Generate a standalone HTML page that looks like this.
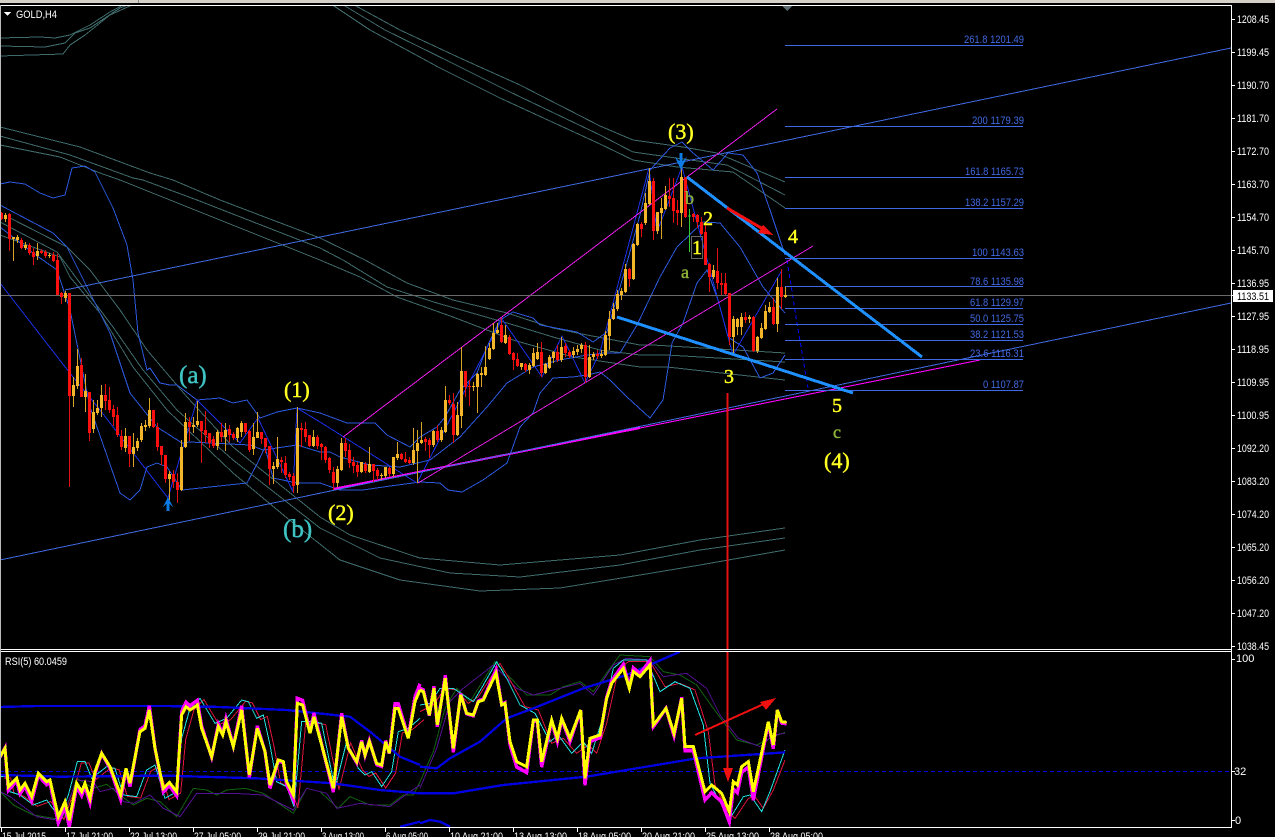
<!DOCTYPE html>
<html><head><meta charset="utf-8"><style>
html,body{margin:0;padding:0;background:#000;width:1275px;height:837px;overflow:hidden}
svg{display:block}
text{font-family:"Liberation Sans",sans-serif;font-size:11px;fill:#fff}
.f text{fill:#4169e1}
text.y,text.t,text.g{font-family:"Liberation Serif",serif;stroke-width:.45px}
text.y{fill:#ffff22;stroke:#ffff22}
text.t{fill:#3fc3c3;stroke:#3fc3c3}
text.g{fill:#8db339;stroke:#8db339}
</style></head><body>
<svg width="1275" height="837" viewBox="0 0 1275 837" xmlns="http://www.w3.org/2000/svg" fill="none" shape-rendering="crispEdges">
<rect width="1275" height="837" fill="#000"/>
<rect width="1275" height="3" fill="#d4d0c8"/><rect x="138" width="1" height="3" fill="#888"/>
<defs><clipPath id="m"><rect x="1" y="6" width="1230" height="643"/></clipPath><clipPath id="r"><rect x="1" y="652" width="1230" height="175"/></clipPath></defs>

<g clip-path="url(#m)">
<!-- teal MA envelopes -->
<g stroke="#3f6a6a" stroke-width="1">
<polyline points="0,38 40,37 55,38 70,35 90,25 110,12 123,5"/>
<polyline points="0,46 45,47 65,43 75,33 90,28 120,8 128,5"/>
<polyline points="0,56 63,54 70,45 85,35 110,15 132,5"/>
<polyline points="0,127 80,147 150,173 173,180 220,200 320,238 365,260 407,283 453,300 507,313 553,328 587,335 640,345 653,345 785,353"/>
<polyline points="0,136 70,155 133,178 143,180 197,200 320,248 343,260 387,287 437,303 507,323 553,337 600,350 640,355 667,355 785,362"/>
<polyline points="0,145 60,157 100,173 120,180 170,200 320,260 360,277 397,297 453,317 513,340 573,357 640,367 667,367 785,380"/>
<polyline points="345,0 400,30 460,58 520,85 600,126 633,140 683,147 717,153 785,182"/>
<polyline points="335,0 385,30 450,62 510,92 600,135 633,152 683,159 727,165 785,195"/>
<polyline points="325,0 370,30 440,68 500,98 600,144 633,160 677,167 733,172 785,208"/>
<polyline points="10,218 67,247 90,270 120,310 147,350 187,397 233,447 320,517 350,535 420,558 500,565 620,555 700,540 785,528"/>
<polyline points="0,222 57,252 80,283 113,327 143,370 177,410 233,460 320,528 380,558 450,573 520,577 620,565 700,550 785,538"/>
<polyline points="0,235 60,257 70,277 100,313 133,367 167,410 233,473 287,518 340,560 400,580 480,591 560,588 640,575 700,565 785,550"/>
</g>
<!-- Bollinger -->
<g stroke="#2b58dc" stroke-width="1">
<polyline points="0,184 10,182 25,184 40,193 53,198 65,195 72,168 85,166 95,172 99,180 113,208 127,245 133,280 138,333 147,370 150,368 160,383 170,385 177,385 197,400 220,398 233,403 247,400 260,418 277,412 297,408 320,413 347,423 375,423 387,435 410,447 420,437 437,427 445,417 460,390 477,373 487,347 500,320 513,312 533,318 540,325 577,332 593,342 607,332 625,270 640,215 650,170 670,148 682,142 692,152 713,170 728,153 743,155 757,173 770,210 785,255"/>
<polyline points="0,205 53,233 67,247 87,287 110,333 130,393 157,427 182,443 190,442 250,445 263,450 297,445 320,452 330,452 340,457 370,465 400,467 430,460 460,437 487,407 507,383 533,367 560,360 587,355 603,353 620,353 637,325 660,277 677,247 703,222 720,223 740,247 763,287 785,313"/>
<polyline points="0,227 33,253 57,270 70,310 90,407 120,493 130,500 140,490 147,467 157,463 167,467 182,490 247,483 258,462 265,447 273,478 297,483 320,483 340,490 363,490 383,487 420,482 440,483 448,490 462,492 483,480 507,463 520,427 533,413 540,393 553,378 573,377 587,375 600,372 610,380 627,397 650,418 663,400 672,343 683,323 697,283 707,270 718,300 728,337 743,347 760,378 773,373 785,355"/>
</g>
<!-- zigzag -->
<polyline stroke="#1a2fe6" stroke-width="1" points="0,283 69,372 100,410 168,498 197,400 240,443 258,418 293,492 297,408 320,422 417,483 502,319 542,377 562,336 585,383 600,352 649,168 657,232 682,167 733,355 782,270"/>
<polyline stroke="#0000ff" stroke-width="1" stroke-dasharray="4 3" points="787,260 797,323 808,388"/>
<!-- trend lines -->
<line x1="333" y1="489" x2="640" y2="428" stroke="#ff00ff" stroke-width="2"/>
<line x1="640" y1="428" x2="980" y2="360" stroke="#ff00ff" stroke-width="1"/>
<g stroke="#3f69e0" stroke-width="1">
<line x1="65" y1="290" x2="1231" y2="48"/>
<line x1="0" y1="560" x2="1231" y2="303"/>
</g>
<g stroke="#e81ee8" stroke-width="1">
<line x1="343" y1="437" x2="777" y2="109"/>
<line x1="418" y1="483" x2="813" y2="246"/>
</g>
<!-- fib -->
<g stroke="#3f69e0" stroke-width="1">
<path d="M785 45.5H1023M785 126.5H1023M785 177.5H1023M785 208.5H1023M785 258.5H1023M785 286.5H1023M785 308.5H1023M785 324.5H1023M785 340.5H1023M785 359.5H1023M785 390.5H1023"/>
</g>
<!-- price line -->
<line x1="0" y1="295.5" x2="1231" y2="295.5" stroke="#6a6a6a" stroke-width="1"/>

<!-- wicks gold -->
<path stroke="#d9a326" stroke-width="1" d="M5.5 213V222M13.5 237V261M17.5 235V243M25.5 242V250M37.5 243V260M49.5 253V258M65.5 291V302M73.5 377V407M77.5 349V389M85.5 374V412M93.5 400V433M97.5 400V415M101.5 385V417M125.5 428V452M133.5 433V467M137.5 438V451M141.5 423V442M145.5 420V431M149.5 398V428M169.5 471V500M181.5 440V491M185.5 413V448M193.5 417V433M197.5 401V427M217.5 430V450M225.5 423V451M237.5 427V442M241.5 421V437M253.5 423V455M257.5 412V438M273.5 462V484M277.5 437V469M297.5 407V493M313.5 430V447M337.5 466V487M341.5 438V471M361.5 462V473M369.5 447V473M381.5 473V480M385.5 467V478M393.5 457V477M397.5 442V460M413.5 428V465M417.5 430V483M421.5 422V444M433.5 430V447M441.5 427V442M445.5 386V433M457.5 402V436M461.5 347V428M473.5 382V391M477.5 373V413M481.5 367V387M485.5 346V376M489.5 343V360M493.5 323V350M497.5 323V334M505.5 325V344M521.5 363V370M529.5 363V374M533.5 348V367M537.5 343V360M545.5 363V374M549.5 355V369M553.5 351V363M561.5 337V362M573.5 347V358M577.5 345V355M581.5 343V353M589.5 345V378M593.5 352V360M601.5 350V358M605.5 331V356M609.5 311V350M613.5 303V320M617.5 290V311M621.5 288V300M625.5 264V293M633.5 243V280M637.5 223V246M645.5 193V225M649.5 168V205M657.5 212V234M661.5 198V239M665.5 186V210M681.5 162V227M713.5 265V279M733.5 316V355M737.5 318V335M741.5 313V335M749.5 315V323M757.5 336V353M761.5 323V339M765.5 305V330M769.5 302V313M777.5 278V332M785.5 287V298"/>
<!-- wicks red -->
<path stroke="#e01010" stroke-width="1" d="M1.5 212V220M9.5 213V251M21.5 238V249M29.5 243V255M33.5 248V265M41.5 249V254M45.5 250V258M53.5 252V262M57.5 254V295M61.5 292V304M69.5 293V487M81.5 358V397M89.5 392V441M105.5 384V410M109.5 387V413M113.5 405V426M117.5 407V437M121.5 430V450M129.5 436V467M153.5 410V428M157.5 423V451M161.5 446V465M165.5 455V483M173.5 470V488M177.5 473V503M189.5 417V441M201.5 421V463M205.5 411V443M209.5 433V448M213.5 436V448M221.5 423V442M229.5 425V442M233.5 432V440M245.5 423V434M249.5 430V452M261.5 432V444M265.5 438V453M269.5 446V485M281.5 457V473M285.5 456V478M289.5 472V480M293.5 473V493M301.5 423V447M305.5 422V442M309.5 435V447M317.5 435V449M321.5 443V460M325.5 446V463M329.5 457V473M333.5 467V490M345.5 438V457M349.5 444V468M353.5 457V473M357.5 462V477M365.5 462V473M373.5 464V482M377.5 468V480M389.5 467V477M401.5 453V460M405.5 452V463M409.5 457V464M425.5 437V451M429.5 438V458M437.5 425V442M449.5 395V405M453.5 393V443M465.5 371V397M469.5 380V406M501.5 318V343M509.5 335V355M513.5 352V370M517.5 353V367M525.5 363V372M541.5 342V377M557.5 345V362M565.5 343V357M569.5 350V358M585.5 342V383M597.5 350V359M629.5 268V287M641.5 222V237M653.5 178V240M669.5 178V207M673.5 178V223M677.5 200V225M685.5 177V218M693.5 213V222M697.5 214V228M701.5 217V235M705.5 225V265M709.5 263V292M717.5 248V289M721.5 273V295M725.5 273V295M729.5 293V345M745.5 312V323M753.5 316V352M773.5 298V325M781.5 269V309"/>
<!-- bodies gold -->
<path stroke="#f3b62a" stroke-width="3" d="M5.5 215V219M13.5 237V239M17.5 237V240M25.5 245V248M37.5 251V256M49.5 255V256M65.5 293V298M73.5 385V396M77.5 366V386M85.5 391V397M93.5 412V429M97.5 408V413M101.5 395V408M125.5 436V448M133.5 447V454M137.5 441V448M141.5 426V440M145.5 425V427M149.5 410V426M169.5 474V479M181.5 447V490M185.5 422V447M193.5 425V427M197.5 421V425M217.5 432V446M225.5 430V437M237.5 428V438M241.5 423V432M253.5 437V449M257.5 432V438M273.5 466V469M277.5 459V467M297.5 428V485M313.5 437V446M337.5 469V483M341.5 443V470M361.5 462V472M369.5 464V472M381.5 475V476M385.5 467V476M393.5 457V474M397.5 454V458M421.5 440V443M413.5 450V463M417.5 443V451M433.5 431V445M441.5 430V440M445.5 400V432M457.5 415V435M461.5 371V416M473.5 386V387M477.5 374V387M481.5 373V375M485.5 367V375M489.5 348V359M493.5 333V349M497.5 330V333M505.5 335V343M521.5 363V367M529.5 365V370M533.5 353V366M537.5 352V359M545.5 364V373M549.5 357V368M553.5 352V358M561.5 347V360M573.5 351V355M577.5 349V352M581.5 345V349M589.5 357V377M593.5 354V357M601.5 354V356M605.5 335V355M609.5 319V336M613.5 309V319M617.5 294V309M621.5 291V295M625.5 269V292M633.5 244V279M637.5 224V245M645.5 203V223M649.5 181V204M657.5 212V231M661.5 208V213M665.5 195V209M681.5 177V213M713.5 270V277M733.5 319V337M737.5 319V327M741.5 317V327M749.5 317V319M757.5 337V351M761.5 328V338M765.5 311V329M769.5 307V312M777.5 287V324M785.5 295V297"/>
<!-- bodies red -->
<path stroke="#fb1010" stroke-width="3" d="M1.5 213V219M9.5 214V239M21.5 240V248M29.5 245V253M33.5 252V257M41.5 251V253M45.5 252V256M53.5 255V261M57.5 260V295M61.5 293V297M69.5 293V396M81.5 365V397M89.5 392V433M105.5 395V401M109.5 400V410M113.5 409V417M117.5 415V435M121.5 436V447M129.5 436V454M153.5 410V427M157.5 427V447M161.5 446V455M165.5 455V479M173.5 474V482M177.5 482V490M189.5 422V427M201.5 421V431M205.5 430V435M209.5 433V443M213.5 439V446M221.5 432V437M229.5 429V435M233.5 434V438M245.5 423V432M249.5 431V450M261.5 432V439M265.5 438V447M269.5 446V469M281.5 460V462M285.5 463V475M289.5 474V477M293.5 476V486M301.5 428V430M305.5 429V437M309.5 435V446M317.5 437V446M321.5 444V447M325.5 447V460M329.5 458V470M333.5 472V483M345.5 443V451M349.5 450V463M353.5 462V466M357.5 465V472M365.5 464V471M373.5 464V471M377.5 470V476M389.5 468V474M401.5 454V459M405.5 459V462M409.5 460V463M425.5 439V442M429.5 440V445M437.5 431V440M449.5 400V403M453.5 404V435M465.5 371V387M469.5 386V387M501.5 325V342M509.5 337V354M513.5 353V360M517.5 359V366M525.5 364V370M541.5 352V373M557.5 352V360M565.5 346V353M569.5 352V356M585.5 345V377M597.5 354V356M629.5 269V279M641.5 224V229M653.5 181V231M669.5 196V199M673.5 198V211M677.5 210V213M685.5 177V217M693.5 214V217M697.5 215V222M701.5 222V234M705.5 232V265M709.5 264V277M717.5 271V283M721.5 283V285M725.5 283V294M729.5 293V337M745.5 317V320M753.5 317V351M773.5 307V324M781.5 287V297"/>
<line x1="689.5" y1="209" x2="689.5" y2="252" stroke="#33cc33" stroke-width="1"/>
<path d="M688 216H691" stroke="#33cc33"/>
<rect x="691.5" y="236.5" width="11" height="22" stroke="#666" stroke-width="1"/>
<!-- thick blue -->
<g stroke="#1e90ff" stroke-width="3">
<line x1="687" y1="177" x2="922" y2="357"/>
<line x1="617" y1="317" x2="853" y2="393"/>
</g>
<!-- blue arrows -->
<path fill="#0d7be6" d="M166.500 511V504L163 507L168 497L173 507L169.500 504V511Z"/>
<path fill="#0d7be6" d="M679.500 153V161L675 157L681 170L687 157L682.500 161V153Z"/>
<!-- small triangle top -->
<path fill="#5a6a70" d="M782 6H792L787 11Z"/>
<!-- red arrow down start -->
<line x1="727.5" y1="393" x2="727.5" y2="649" stroke="#e81010" stroke-width="2"/>
<line x1="727" y1="208" x2="763" y2="229" stroke="#f01010" stroke-width="3"/>
<path fill="#f01010" d="M773 235L763 225L758 233Z"/>
</g>

<g shape-rendering="auto">
<text class="t" x="179" y="383" style="font-size:25px">(a)</text>
<text class="y" x="284" y="397" style="font-size:22px">(1)</text>
<text class="y" x="328" y="520" style="font-size:22px">(2)</text>
<text class="t" x="283" y="537" style="font-size:25px">(b)</text>
<text class="y" x="668" y="139" style="font-size:22px">(3)</text>
<text class="g" x="685" y="204" style="font-size:18px">b</text>
<text class="g" x="681" y="278" style="font-size:18px">a</text>
<text class="y" x="692" y="254" style="font-size:20px">1</text>
<text class="y" x="703" y="225" style="font-size:20px">2</text>
<text class="y" x="724" y="383" style="font-size:20px">3</text>
<text class="y" x="788" y="243" style="font-size:20px">4</text>
<text class="y" x="832" y="412" style="font-size:20px">5</text>
<text class="g" x="833" y="438" style="font-size:18px">c</text>
<text class="y" x="824" y="468" style="font-size:22px">(4)</text>
</g>

<!-- fib labels -->
<g class="f" text-anchor="end" shape-rendering="auto">
<text x="1024" y="43" textLength="60" lengthAdjust="spacingAndGlyphs">261.8  1201.49</text>
<text x="1024" y="124" textLength="52" lengthAdjust="spacingAndGlyphs">200  1179.39</text>
<text x="1024" y="175" textLength="59" lengthAdjust="spacingAndGlyphs">161.8  1165.73</text>
<text x="1024" y="206" textLength="59" lengthAdjust="spacingAndGlyphs">138.2  1157.29</text>
<text x="1024" y="256" textLength="52" lengthAdjust="spacingAndGlyphs">100  1143.63</text>
<text x="1024" y="285" textLength="54" lengthAdjust="spacingAndGlyphs">78.6  1135.98</text>
<text x="1024" y="306" textLength="54" lengthAdjust="spacingAndGlyphs">61.8  1129.97</text>
<text x="1024" y="322" textLength="54" lengthAdjust="spacingAndGlyphs">50.0  1125.75</text>
<text x="1024" y="338" textLength="54" lengthAdjust="spacingAndGlyphs">38.2  1121.53</text>
<text x="1024" y="357" textLength="54" lengthAdjust="spacingAndGlyphs">23.6  1116.31</text>
<text x="1024" y="388" textLength="41" lengthAdjust="spacingAndGlyphs">0  1107.87</text>
</g>

<!-- RSI pane -->
<g clip-path="url(#r)">
<line x1="0" y1="771.5" x2="1231" y2="771.5" stroke="#0000e0" stroke-width="1" stroke-dasharray="4 3"/>
<defs>
<polyline id="y1" points="0,335 15,310 25,425 50,400 60,435 75,415 95,455 115,385 140,410 150,405 175,515 195,470 208,525 230,415 245,440 255,415 270,460 285,380 305,325 330,365 362,450 378,370 390,415 420,260 435,250 448,195 465,310 490,430 508,412 530,440 545,210 558,185 570,195 592,180 605,250 635,335 655,245 668,270 678,230 700,305 725,195 748,390 772,250 795,320 810,420 835,345 850,350 860,410 880,450 892,175 908,180 930,265 942,215 965,300 1000,430 1025,215 1045,310 1070,350 1085,290 1095,330 1108,290 1130,355 1145,360 1157,290 1168,325 1185,190 1195,190 1225,280 1245,170 1260,135"/>
<polyline id="y2" points="0,135 10,140 28,210 42,130 52,240 76,100 100,310 122,150 140,205 160,210 175,170 190,165 228,85 245,180 255,175 270,290 290,350 320,365 340,225 352,225 365,350 395,225 412,280 425,220 450,280 482,195 495,400 510,280 540,270 560,160 575,115 610,70 628,130 640,80 660,95 690,60 700,240 712,225 738,190 762,265 785,160 795,305 820,305 855,440 875,420 905,445 928,500 940,410 952,420 965,365 985,350 1000,440 1045,230 1060,300 1072,195 1085,230 1100,232"/>
<polyline id="c1" points="0,395 20,395 30,440 60,450 100,480 140,465 180,520 205,450 232,350 255,350 275,400 320,365 345,370 370,450 410,455 440,375 465,360 495,460 530,440 545,280 570,190 600,160 630,210 645,235 680,220 725,165 745,170 770,220 790,210 810,300 830,410 860,425 882,485 905,230 940,230 965,235 1005,430 1040,290 1075,370 1095,390 1115,380 1145,425 1175,380 1195,260 1225,250 1260,220"/>
<polyline id="c2" points="0,180 30,175 60,130 100,130 130,150 160,170 190,120 230,50 260,100 300,180 345,205 390,290 415,270 455,325 490,290 515,325 545,230 580,70 610,45 680,45 720,140 765,110 810,130 850,240 870,415 910,490 930,520 970,455 990,450 1025,500 1050,440 1095,315"/>
</defs>
<g transform="translate(0,645) scale(0.33333)">
<polyline stroke="#106010" stroke-width="3" points="0,440 40,480 100,510 160,520 190,520 230,400 280,430 320,418 360,450 400,480 440,460 480,470 530,515 580,430 620,435 650,450 680,435 735,430 790,445 880,505 920,430 960,440 1015,490 1050,455 1110,480 1170,480 1210,450 1240,450 1260,410"/>
<polyline stroke="#501090" stroke-width="3" points="0,440 30,455 110,515 170,525 190,510 230,405 280,410 300,440 340,430 370,470 400,475 450,450 490,490 540,515 590,445 700,445 790,450 880,495 920,430 980,445 1010,490 1080,475 1170,485 1230,440 1260,420"/>
<use href="#c1" stroke="#dc143c" stroke-width="3" transform="translate(12,4)"/>
<use href="#c1" stroke="#20e0e0" stroke-width="3"/>
<polyline stroke="#0000e0" stroke-width="7" points="0,186 110,183 500,183 660,186 860,195 1050,215 1110,260 1200,335 1260,360"/>
<polyline stroke="#0000e0" stroke-width="7" points="0,390 180,395 500,392 770,400 1000,415 1140,435 1260,445"/>
<polyline stroke="#0000e0" stroke-width="7" points="1200,545 1260,530"/>
<use href="#y1" stroke="#ff00ff" stroke-width="10" transform="translate(0,320) scale(1,1.1) translate(0,-320)"/>
<use href="#y1" stroke="#ffff00" stroke-width="9"/>
</g>
<g transform="translate(420,645) scale(0.33333)">
<polyline stroke="#106010" stroke-width="3" points="0,410 40,320 75,190 110,130 150,170 225,50 320,150 390,150 430,125 480,110 520,140 570,70 600,30 690,35 730,80 780,90 830,120 880,190 950,285 1010,300 1060,275 1095,262"/>
<polyline stroke="#501090" stroke-width="3" points="0,430 50,310 90,170 130,130 220,60 290,130 340,150 420,130 480,115 520,150 580,60 620,40 690,45 730,95 800,85 860,130 900,210 955,280 1020,305 1060,270 1095,265"/>
<polyline stroke="#dc143c" stroke-width="3" points="0,200 40,180 75,130 110,135 145,175 175,155 240,55 270,105 315,185 355,195 395,295 430,280 470,325 505,300 530,325 560,235 595,75 625,50 690,50 735,125 780,115 825,135 865,260 885,420 920,495 945,520 985,460 1005,455 1030,490 1060,435 1095,345"/>
<use href="#c2" stroke="#20e0e0" stroke-width="3"/>
<polyline stroke="#0000e0" stroke-width="7" points="0,365 50,370 90,340 180,290 260,220 340,190 490,130 620,90 780,20"/>
<polyline stroke="#0000e0" stroke-width="7" points="0,445 100,445 250,420 500,395 830,340 1095,322"/>
<polyline stroke="#0000e0" stroke-width="7" points="0,535 30,525 60,530 90,545"/>
<use href="#y2" stroke="#ff00ff" stroke-width="10" transform="translate(0,190) scale(1,1.1) translate(0,-190)"/>
<use href="#y2" stroke="#ffff00" stroke-width="9"/>
</g>
<line x1="727.5" y1="652" x2="727.5" y2="770" stroke="#e81010" stroke-width="2"/>
<path fill="#f01010" d="M723 768H733L728 782Z"/>
<line x1="695" y1="735" x2="766" y2="703" stroke="#f01010" stroke-width="2"/>
<path fill="#f01010" d="M776 698L760 702L766 710Z"/>
</g>

<!-- frame -->
<path stroke="#fff" stroke-width="1" d="M0 5.500H1232M0 649.500H1232M0 651.500H1232M0 827.500H1232M1231.500 5V828"/>
<rect x="0" y="5" width="1" height="822" fill="#bbb"/>
<path fill="#fff" d="M4 12H11L7.500 16Z"/>
<g shape-rendering="auto">
<text x="16" y="18" textLength="41" lengthAdjust="spacingAndGlyphs">GOLD,H4</text>
<text x="5" y="665" textLength="62" lengthAdjust="spacingAndGlyphs">RSI(5) 60.0459</text>
</g>

<!-- axis ticks -->
<path stroke="#fff" stroke-width="1" d="M1232 19.500h3M1232 52.500h3M1232 85.500h3M1232 118.500h3M1232 151.500h3M1232 184.500h3M1232 217.500h3M1232 250.500h3M1232 283.500h3M1232 316.500h3M1232 349.500h3M1232 382.500h3M1232 415.500h3M1232 448.500h3M1232 481.500h3M1232 514.500h3M1232 547.500h3M1232 580.500h3M1232 613.500h3M1232 646.500h3M1.500 828v4M65.500 828v4M129.500 828v4M193.500 828v4M257.500 828v4M321.500 828v4M385.500 828v4M449.500 828v4M513.500 828v4M577.500 828v4M641.500 828v4M705.500 828v4M769.500 828v4"/>
<g shape-rendering="auto">
<text x="1237" y="23" textLength="32" lengthAdjust="spacingAndGlyphs">1208.45</text>
<text x="1237" y="56" textLength="32" lengthAdjust="spacingAndGlyphs">1199.45</text>
<text x="1237" y="89" textLength="32" lengthAdjust="spacingAndGlyphs">1190.70</text>
<text x="1237" y="122" textLength="32" lengthAdjust="spacingAndGlyphs">1181.70</text>
<text x="1237" y="155" textLength="32" lengthAdjust="spacingAndGlyphs">1172.70</text>
<text x="1237" y="188" textLength="32" lengthAdjust="spacingAndGlyphs">1163.70</text>
<text x="1237" y="221" textLength="32" lengthAdjust="spacingAndGlyphs">1154.70</text>
<text x="1237" y="254" textLength="32" lengthAdjust="spacingAndGlyphs">1145.70</text>
<text x="1237" y="287" textLength="32" lengthAdjust="spacingAndGlyphs">1136.95</text>
<text x="1237" y="320" textLength="32" lengthAdjust="spacingAndGlyphs">1127.95</text>
<text x="1237" y="353" textLength="32" lengthAdjust="spacingAndGlyphs">1118.95</text>
<text x="1237" y="386" textLength="32" lengthAdjust="spacingAndGlyphs">1109.95</text>
<text x="1237" y="419" textLength="32" lengthAdjust="spacingAndGlyphs">1100.95</text>
<text x="1237" y="452" textLength="32" lengthAdjust="spacingAndGlyphs">1092.20</text>
<text x="1237" y="485" textLength="32" lengthAdjust="spacingAndGlyphs">1083.20</text>
<text x="1237" y="518" textLength="32" lengthAdjust="spacingAndGlyphs">1074.20</text>
<text x="1237" y="551" textLength="32" lengthAdjust="spacingAndGlyphs">1065.20</text>
<text x="1237" y="584" textLength="32" lengthAdjust="spacingAndGlyphs">1056.20</text>
<text x="1237" y="617" textLength="32" lengthAdjust="spacingAndGlyphs">1047.20</text>
<text x="1237" y="650" textLength="32" lengthAdjust="spacingAndGlyphs">1038.45</text>
<text x="1236" y="662">100</text>
<text x="1234" y="775">32</text>
<text x="1235" y="824">0</text>
</g>
<rect x="1233" y="290" width="40" height="12" fill="#fff"/>
<text x="1237" y="300" textLength="32" lengthAdjust="spacingAndGlyphs" style="fill:#000" shape-rendering="auto">1133.51</text>
<path stroke="#fff" stroke-width="1" d="M1232 295.500h2M1232 659.500h3M1232 771.500h3M1232 820.500h3"/>

<!-- dates -->
<g shape-rendering="auto">
<text x="2" y="840" textLength="44" lengthAdjust="spacingAndGlyphs">15 Jul 2015</text>
<text x="66" y="840" textLength="47" lengthAdjust="spacingAndGlyphs">17 Jul 21:00</text>
<text x="130" y="840" textLength="47" lengthAdjust="spacingAndGlyphs">22 Jul 13:00</text>
<text x="194" y="840" textLength="47" lengthAdjust="spacingAndGlyphs">27 Jul 05:00</text>
<text x="258" y="840" textLength="47" lengthAdjust="spacingAndGlyphs">29 Jul 21:00</text>
<text x="322" y="840" textLength="42" lengthAdjust="spacingAndGlyphs">3 Aug 13:00</text>
<text x="386" y="840" textLength="42" lengthAdjust="spacingAndGlyphs">6 Aug 05:00</text>
<text x="450" y="840" textLength="53" lengthAdjust="spacingAndGlyphs">10 Aug 21:00</text>
<text x="514" y="840" textLength="53" lengthAdjust="spacingAndGlyphs">13 Aug 13:00</text>
<text x="578" y="840" textLength="53" lengthAdjust="spacingAndGlyphs">18 Aug 05:00</text>
<text x="642" y="840" textLength="53" lengthAdjust="spacingAndGlyphs">20 Aug 21:00</text>
<text x="706" y="840" textLength="53" lengthAdjust="spacingAndGlyphs">25 Aug 13:00</text>
<text x="770" y="840" textLength="53" lengthAdjust="spacingAndGlyphs">28 Aug 05:00</text>
</g>
</svg>
</body></html>
